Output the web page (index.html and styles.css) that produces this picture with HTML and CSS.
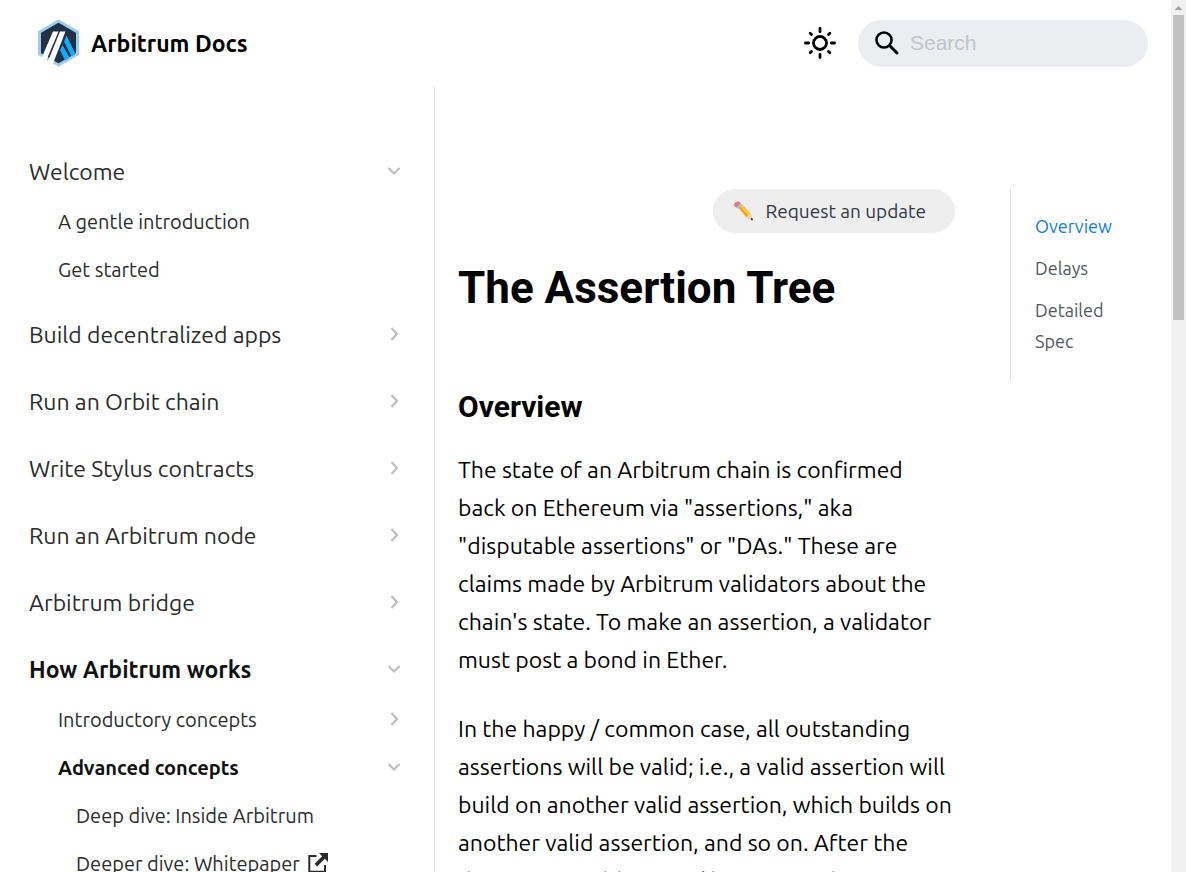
FILE: index.html
```html
<!DOCTYPE html>
<html lang="en">
<head>
<meta charset="utf-8">
<title>The Assertion Tree | Arbitrum Docs</title>
<link rel="stylesheet" href="styles.css">
</head>
<body>
<svg class="sprite" aria-hidden="true">
  <symbol id="chevron-down" viewBox="0 0 14 14"><path d="M1.500 4 7 9.500 12.500 4" fill="none" stroke="currentColor" stroke-width="2.200"/></symbol>
  <symbol id="chevron-right" viewBox="0 0 14 14"><path d="M4.500 1 10 7 4.500 13" fill="none" stroke="currentColor" stroke-width="2.200"/></symbol>
</svg>
<div class="window">
  <div class="page">
    <header class="navbar">
      <a class="brand" href="#">
        <svg class="logo" viewBox="0 0 42 48" aria-hidden="true">
          <path d="M20.500 2 39.500 13v22L20.500 46 1.500 35V13z" fill="#213147" stroke="#9dcced" stroke-width="3" stroke-linejoin="round"/>
          <path d="M28.500 16.500 37.500 35 33.500 37.500 26 22.500zM24.500 26 31.500 38.500 27 41.500 22 31z" fill="#12aaff"/>
          <path d="M15 12.500h5.500L8.500 41 4 38zM22 12.500h5.500L15 44.500l-5-2.500z" fill="#fff"/>
        </svg>
        <span>Arbitrum Docs</span>
      </a>
      <div class="tools">
        <button class="theme" type="button" aria-label="Switch theme">
          <svg viewBox="0 0 34 34" aria-hidden="true">
            <g fill="none" stroke="#000" stroke-width="2.800" stroke-linecap="round">
              <circle cx="17" cy="17" r="6.500"/>
              <path d="M17 2.500v3.200M17 28.300v3.200M2.500 17h3.200M28.300 17h3.200M7.200 7.200l1.300 1.300M25.500 25.500l1.300 1.300M26.800 7.200l-1.300 1.300M8.500 25.500l-1.300 1.300"/>
            </g>
          </svg>
        </button>
        <label class="search">
          <svg viewBox="0 0 24 24" aria-hidden="true"><g fill="none" stroke="#000" stroke-linecap="round"><circle cx="9" cy="9" r="7.500" stroke-width="2.600"/><path d="m14.800 14.800 7.200 7.200" stroke-width="3"/></g></svg>
          <input type="search" placeholder="Search" aria-label="Search">
        </label>
      </div>
    </header>
    <div class="columns">
      <nav class="sidebar" aria-label="Docs">
        <ul class="menu">
          <li><a href="#"><span>Welcome</span><svg class="chevron"><use href="#chevron-down"/></svg></a>
            <ul>
              <li><a href="#">A gentle introduction</a></li>
              <li><a href="#">Get started</a></li>
            </ul>
          </li>
          <li><a href="#"><span>Build decentralized apps</span><svg class="chevron"><use href="#chevron-right"/></svg></a></li>
          <li><a href="#"><span>Run an Orbit chain</span><svg class="chevron"><use href="#chevron-right"/></svg></a></li>
          <li><a href="#"><span>Write Stylus contracts</span><svg class="chevron"><use href="#chevron-right"/></svg></a></li>
          <li><a href="#"><span>Run an Arbitrum node</span><svg class="chevron"><use href="#chevron-right"/></svg></a></li>
          <li><a href="#"><span>Arbitrum bridge</span><svg class="chevron"><use href="#chevron-right"/></svg></a></li>
          <li><a class="active" href="#"><span>How Arbitrum works</span><svg class="chevron"><use href="#chevron-down"/></svg></a>
            <ul>
              <li><a href="#"><span>Introductory concepts</span><svg class="chevron"><use href="#chevron-right"/></svg></a></li>
              <li><a class="active" href="#"><span>Advanced concepts</span><svg class="chevron"><use href="#chevron-down"/></svg></a>
                <ul>
                  <li><a href="#">Deep dive: Inside Arbitrum</a></li>
                  <li><a class="external" href="#">Deeper dive: Whitepaper
                    <svg viewBox="0 0 20 20" aria-hidden="true"><path d="M8.500 3H1.300v15.700H17V12" fill="none" stroke="currentColor" stroke-width="2"/><path d="M11 0h9v9l-3.200-3.200-7.600 7.600-2.600-2.600 7.600-7.600z" fill="currentColor"/></svg></a></li>
                </ul>
              </li>
            </ul>
          </li>
        </ul>
      </nav>
      <main class="content">
        <article>
          <a class="update" href="#">
            <svg viewBox="0 0 20 20" aria-hidden="true">
              <path d="m4.500 5.500 3.500-3L17.500 12l1.500 6.500-6-2z" fill="#fdc73c"/>
              <path d="M5.500 6.500 14 16l1.300-1L6.800 5z" fill="#f59a35"/>
              <path d="m13 16.500 4.500-4.500 2 7z" fill="#f2d6a0"/>
              <path d="m18 18.500.800-1.500.700 2z" fill="#444" stroke="#444"/>
              <path d="m3.200 6.200 4-4L9 4 5 8z" fill="#9dc9dc"/>
              <path d="m3.500 6.500 4-4-1-1.300C5.500.200 4.200 0 2.500 1.400S.200 4.200 1.600 5.200z" fill="#ef7480"/>
            </svg>
            <span>Request an update</span>
          </a>
          <h1>The Assertion Tree</h1>
          <h2>Overview</h2>
          <p>The state of an Arbitrum chain is confirmed<br>back on Ethereum via "assertions," aka<br>"disputable assertions" or "DAs." These are<br>claims made by Arbitrum validators about the<br>chain's state. To make an assertion, a validator<br>must post a bond in Ether.</p>
          <p>In the happy / common case, all outstanding<br>assertions will be valid; i.e., a valid assertion will<br>build on another valid assertion, which builds on<br>another valid assertion, and so on. After the<br>dispute period (~ 1 week) passes and an</p>
        </article>
        <nav class="toc" aria-label="On this page">
          <a class="current" href="#">Overview</a>
          <a href="#">Delays</a>
          <a href="#">Detailed Spec</a>
        </nav>
      </main>
    </div>
  </div>
  <div class="scrollbar" aria-hidden="true">
    <svg viewBox="0 0 15 15"><path d="M3.500 10 7.500 6l4 4z" fill="#a3a3a3"/></svg>
    <div class="thumb"></div>
  </div>
</div>
</body>
</html>
```
FILE: styles.css
```css
* { box-sizing: border-box; }
body {
  margin: 0;
  background: #fff;
  color: #000;
  font-family: Ubuntu, "Noto Sans", sans-serif;
  font-size: 23px;
}
a { color: inherit; text-decoration: none; }
ul { list-style: none; margin: 0; padding: 0; }
.sprite { display: none; }

.window {
  display: grid;
  grid-template-columns: 1fr 15px;
  height: 100vh;
  overflow: hidden;
}
.page { min-width: 0; }

/* top bar */
.navbar {
  display: flex;
  align-items: center;
  justify-content: space-between;
  height: 87px;
  padding: 0 23px 1px 38px;
}
.brand { display: flex; align-items: center; gap: 11px; font-weight: 700; }
.logo { width: 42px; height: 48px; }
.tools { display: flex; align-items: center; gap: 20px; }
.theme {
  width: 36px;
  height: 36px;
  padding: 1px;
  border: 0;
  background: none;
}
.theme svg { display: block; width: 34px; height: 34px; }
.search {
  display: flex;
  align-items: center;
  gap: 11px;
  width: 290px;
  height: 47px;
  padding: 0 17px;
  border-radius: 24px;
  background: #ebedf0;
}
.search svg { flex: none; width: 24px; height: 24px; }
.search input {
  min-width: 0;
  flex: 1;
  padding: 0;
  border: 0;
  outline: 0;
  background: none;
  font: 21px "Liberation Sans", Arial, sans-serif;
}
.search input::placeholder { color: #c0c5cb; }

/* columns */
.columns { display: grid; grid-template-columns: 435px 1fr; }
.sidebar {
  padding: 58px 33px 0 29px;
  border-right: 1px solid #dadde1;
  color: #2b2b2b;
}
.menu > li + li { margin-top: 15px; }
.menu a {
  display: flex;
  align-items: center;
  justify-content: space-between;
  height: 52px;
}
.menu ul { padding-left: 29px; font-size: 20px; }
.menu ul a { height: 48px; }
.menu ul ul { padding-left: 18px; }
.menu .active { color: #111; font-weight: 700; }
.menu .external { justify-content: flex-start; gap: 8px; }
.external svg { width: 20px; height: 20px; }
.chevron { flex: none; width: 14px; height: 14px; color: #bfbfbf; }

/* article */
.content {
  display: grid;
  grid-template-columns: 1fr 137px;
  align-items: start;
  gap: 40px;
  padding: 102px 24px 0 23px;
}
article { display: flex; flex-direction: column; min-width: 0; white-space: nowrap; }
.update {
  display: flex;
  align-items: center;
  align-self: flex-end;
  gap: 12px;
  height: 44px;
  margin-right: 15px;
  padding: 0 29px 0 20px;
  border-radius: 22px;
  background: #eee;
  color: #303846;
  font-size: 19px;
}
.update svg { width: 20px; height: 20px; }
h1, h2 { margin: 0; font-family: Roboto, sans-serif; font-weight: 700; }
h1 { margin-top: 26px; font-size: 44px; line-height: 58px; }
h2 { margin-top: 71px; font-size: 30px; line-height: 38px; }
p { margin: 25px 0 0; line-height: 38px; }
p + p { margin-top: 31px; }

/* table of contents */
.toc {
  display: flex;
  flex-direction: column;
  gap: 11px;
  padding: 22px 30px 24px 24px;
  border-left: 1px solid #dadde1;
  color: #525860;
  font-size: 18px;
  line-height: 31px;
}
.toc .current { color: #0d7bdc; }

/* scrollbar */
.scrollbar { background: #f1f1f1; }
.scrollbar svg { display: block; width: 15px; height: 15px; }
.thumb { height: 35vh; margin: 0 2px; background: #c1c1c1; }
```
